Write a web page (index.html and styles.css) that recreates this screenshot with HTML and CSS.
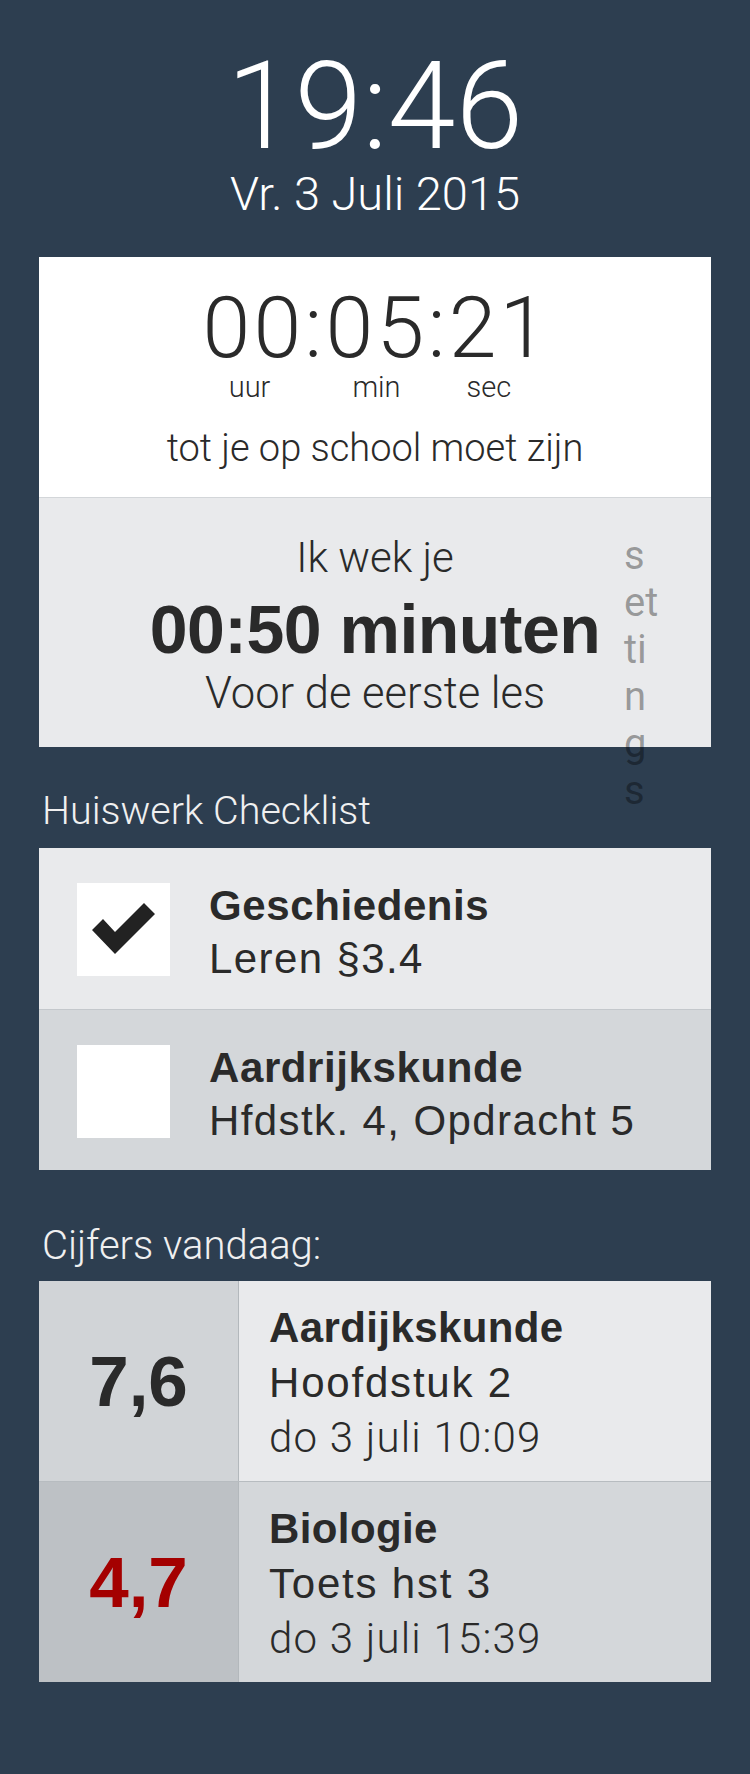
FILE: index.html
```html
<!DOCTYPE html>
<html lang="nl">
<head>
<meta charset="utf-8">
<title>Wekker</title>
<link rel="stylesheet" href="styles.css">
</head>
<body>
<div class="page">
  <header class="clock">
    <div class="clock-time">19:46</div>
    <div class="clock-date">Vr. 3 Juli 2015</div>
  </header>

  <section class="card timer-card">
    <div class="countdown">
      <div class="countdown-time">00:05:21</div>
      <div class="countdown-units">
        <span class="unit unit-h">uur</span>
        <span class="unit unit-m">min</span>
        <span class="unit unit-s">sec</span>
      </div>
      <div class="countdown-caption">tot je op school moet zijn</div>
    </div>
    <div class="alarm">
      <div class="alarm-intro">Ik wek je</div>
      <div class="alarm-value">00:50 minuten</div>
      <div class="alarm-caption">Voor de eerste les</div>
      <div class="settings">settings</div>
    </div>
  </section>

  <h2 class="section-title title-homework">Huiswerk Checklist</h2>
  <section class="card checklist">
    <div class="check-row row-light">
      <div class="checkbox">
        <svg width="93" height="93" viewBox="0 0 93 93"><polygon points="15,47 26,36 38,49 67,20 78,31 38,71" fill="#222"/></svg>
      </div>
      <div class="item-text">
        <div class="item-subject">Geschiedenis</div>
        <div class="item-task">Leren §3.4</div>
      </div>
    </div>
    <div class="check-row row-mid">
      <div class="checkbox"></div>
      <div class="item-text">
        <div class="item-subject">Aardrijkskunde</div>
        <div class="item-task">Hfdstk. 4, Opdracht 5</div>
      </div>
    </div>
  </section>

  <h2 class="section-title title-grades">Cijfers vandaag:</h2>
  <section class="card grades">
    <div class="grade-row">
      <div class="grade-value grade-bg-1">7,6</div>
      <div class="grade-info grade-info-1">
        <div class="grade-subject">Aardijkskunde</div>
        <div class="grade-desc">Hoofdstuk 2</div>
        <div class="grade-date">do 3 juli 10:09</div>
      </div>
    </div>
    <div class="grade-row grade-row-2">
      <div class="grade-value grade-bg-2 grade-low">4,7</div>
      <div class="grade-info grade-info-2">
        <div class="grade-subject">Biologie</div>
        <div class="grade-desc">Toets hst 3</div>
        <div class="grade-date">do 3 juli 15:39</div>
      </div>
    </div>
  </section>
</div>
</body>
</html>
```

FILE: styles.css
```css
html, body {
  margin: 0;
  padding: 0;
  background: #2d3e50;
}

body {
  min-height: 1774px;
  font-family: "Liberation Sans", Arial, sans-serif;
  color: #2a2a2a;
}

.page {
  padding: 0 39px 60px;
}

.clock {
  text-align: center;
  color: #ffffff;
  font-family: Roboto, "Liberation Sans", sans-serif;
  font-weight: 300;
  padding-top: 46px;
}

.clock-time {
  font-size: 122px;
  line-height: 122px;
}

.clock-date {
  font-size: 47px;
  line-height: 50px;
  margin-top: 1px;
}

.card {
  margin-top: 38px;
}

.timer-card {
  position: relative;
}

.countdown {
  background: #ffffff;
  text-align: center;
  padding: 28px 0 29px;
  font-family: Roboto, "Liberation Sans", sans-serif;
  font-weight: 300;
}

.countdown-time {
  font-size: 86px;
  line-height: 86px;
  letter-spacing: 3.2px;
  padding-left: 3px;
  color: #2a2a2a;
}

.countdown-units {
  display: flex;
  justify-content: center;
  font-size: 29px;
  line-height: 30px;
  margin-top: 1px;
  padding-right: 10px;
}

.unit-m {
  margin-left: 82px;
}

.unit-s {
  margin-left: 66px;
}

.countdown-caption {
  font-size: 38px;
  line-height: 40px;
  margin-top: 26px;
}

.alarm {
  position: relative;
  background: #e9eaec;
  border-top: 1px solid #d3d6d9;
  text-align: center;
  padding: 37px 0 30px;
}

.alarm-intro,
.alarm-caption {
  font-family: Roboto, "Liberation Sans", sans-serif;
  font-weight: 300;
  font-size: 42px;
  line-height: 46px;
}

.alarm-value {
  font-weight: 700;
  font-size: 68px;
  line-height: 70px;
  margin-top: 13px;
  letter-spacing: -0.5px;
}

.alarm-caption {
  font-size: 43.5px;
  margin-top: 7px;
}

.settings {
  position: absolute;
  left: 585px;
  top: 34px;
  width: 0.9em;
  font-family: Roboto, "Liberation Sans", sans-serif;
  font-size: 40px;
  line-height: 47px;
  text-align: left;
  word-break: break-all;
  color: rgba(0, 0, 0, 0.36);
}

.section-title {
  margin: 0;
  font-family: Roboto, "Liberation Sans", sans-serif;
  font-weight: 300;
  font-size: 39.5px;
  line-height: 40px;
  color: #f0f0f0;
  padding-left: 3px;
}

.title-homework {
  margin-top: 44px;
}

.title-grades {
  margin-top: 56px;
  font-size: 40px;
}

.checklist {
  margin-top: 17px;
}

.check-row {
  display: flex;
  align-items: flex-start;
  gap: 39px;
  height: 161px;
  box-sizing: border-box;
  padding: 35px 38px 0;
}

.row-light {
  background: #e9eaec;
}

.row-mid {
  background: #d4d7da;
  border-top: 1px solid #c4c8cc;
}

.checkbox {
  width: 93px;
  height: 93px;
  background: #ffffff;
  flex: none;
}

.checkbox svg {
  display: block;
}

.item-text {
  margin-top: -4px;
  font-size: 42px;
  line-height: 53px;
  letter-spacing: 1.4px;
}

.item-subject {
  font-weight: 700;
  letter-spacing: 0.6px;
}

.grades {
  margin-top: 15px;
}

.grade-row {
  display: flex;
  height: 200px;
}

.grade-row-2 {
  border-top: 1px solid #b7bcc0;
}

.grade-value {
  width: 199px;
  flex: none;
  display: flex;
  align-items: center;
  justify-content: center;
  border-right: 1px solid #b3b8bc;
  font-weight: 700;
  font-size: 71px;
  color: #2a2a2a;
}

.grade-bg-1 {
  background: #d1d4d7;
}

.grade-bg-2 {
  background: #bdc1c5;
}

.grade-low {
  color: #a40000;
}

.grade-info {
  flex: 1;
  padding: 19px 0 0 30px;
  font-size: 42px;
  line-height: 55px;
  letter-spacing: 1.8px;
}

.grade-info-1 {
  background: #e9eaec;
}

.grade-info-2 {
  background: #d4d7da;
}

.grade-subject {
  font-weight: 700;
  letter-spacing: 0.4px;
}

.grade-date {
  font-family: Roboto, "Liberation Sans", sans-serif;
  font-weight: 300;
  letter-spacing: 1.2px;
}
```
